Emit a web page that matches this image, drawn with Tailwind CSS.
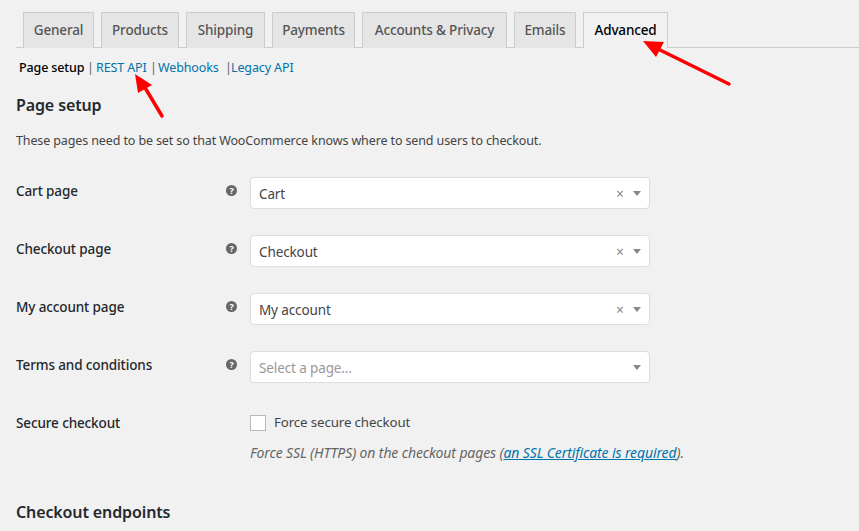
<!DOCTYPE html>
<html lang="en">
<head>
    <meta charset="UTF-8">
    <title>WooCommerce settings</title>
    <script src="https://cdn.jsdelivr.net/npm/@tailwindcss/browser@4"></script>
</head>
<body class="bg-[#f1f1f1] h-[531px] w-[859px] overflow-hidden relative font-['Noto_Sans','Open_Sans',sans-serif] text-[12.5px] tracking-[-0.12px] text-[#444]">
    <!-- Tabs -->
    <div class="ml-4 pt-3 h-[48px] border-b border-[#ccc] flex pl-[7px] gap-[7px] text-[13.5px] tracking-[-0.15px] font-medium text-[#555]">
        <div class="w-[71px] h-[36px] pb-[1px] bg-[#e5e5e5] border border-b-0 border-[#ccc] flex items-center justify-center">General</div>
        <div class="w-[78px] h-[36px] pb-[1px] bg-[#e5e5e5] border border-b-0 border-[#ccc] flex items-center justify-center">Products</div>
        <div class="w-[79px] h-[36px] pb-[1px] bg-[#e5e5e5] border border-b-0 border-[#ccc] flex items-center justify-center">Shipping</div>
        <div class="w-[83px] h-[36px] pb-[1px] bg-[#e5e5e5] border border-b-0 border-[#ccc] flex items-center justify-center">Payments</div>
        <div class="w-[145px] h-[36px] pb-[1px] bg-[#e5e5e5] border border-b-0 border-[#ccc] flex items-center justify-center">Accounts &amp; Privacy</div>
        <div class="w-[62px] h-[36px] pb-[1px] bg-[#e5e5e5] border border-b-0 border-[#ccc] flex items-center justify-center">Emails</div>
        <div class="w-[85px] h-[36px] pb-[1px] bg-[#f1f1f1] border border-b-0 border-[#ccc] flex items-center justify-center text-black z-10">Advanced</div>
    </div>

    <!-- Sub nav -->
    <div class="ml-[19px] mt-[11px] h-[18px] flex items-center text-[#666] leading-[18px] whitespace-nowrap">
        <span class="font-medium text-black w-[68px]">Page setup</span>
        <span class="w-[9px]">|</span>
        <a class="text-[#0073aa] w-[54px]">REST API</a>
        <span class="w-[8px]">|</span>
        <a class="text-[#0073aa] w-[67px]">Webhooks</a>
        <span class="w-[6px]">|</span>
        <a class="text-[#0073aa]">Legacy API</a>
    </div>

    <main class="px-4">
        <h2 class="mt-[17px] text-[16px] leading-[22px] font-semibold text-[#23282d]">Page setup</h2>
        <p class="mt-[16px] leading-[18px] whitespace-nowrap">These pages need to be set so that WooCommerce knows where to send users to checkout.</p>

        <div class="mt-[27px] flex flex-col gap-[26px] text-[13.5px]">
            <div class="flex h-[32px]">
                <label class="w-[210px] pt-[4px] font-medium text-[#23282d]">Cart page</label>
                <div class="w-[24px] pt-[8px]"><svg class="w-[11px] h-[11px]" viewBox="0 0 11 11"><circle cx="5.5" cy="5.5" r="5.5" fill="#666"/><text x="5.5" y="9" text-anchor="middle" font-size="9" font-weight="700" fill="#fff">?</text></svg></div>
                <div class="w-[400px] h-[32px] pt-[2px] bg-white border border-[#ddd] rounded-[4px] flex items-center pl-2 text-[#444] relative">
                    Cart
                    <span class="absolute right-[25px] top-[7px] text-[14px] leading-[18px] text-[#888]">×</span>
                    <span class="absolute right-[8px] top-[13px] border-x-[4.5px] border-x-transparent border-t-[5px] border-t-[#888]"></span>
                </div>
            </div>
            <div class="flex h-[32px]">
                <label class="w-[210px] pt-[4px] font-medium text-[#23282d]">Checkout page</label>
                <div class="w-[24px] pt-[8px]"><svg class="w-[11px] h-[11px]" viewBox="0 0 11 11"><circle cx="5.5" cy="5.5" r="5.5" fill="#666"/><text x="5.5" y="9" text-anchor="middle" font-size="9" font-weight="700" fill="#fff">?</text></svg></div>
                <div class="w-[400px] h-[32px] pt-[2px] bg-white border border-[#ddd] rounded-[4px] flex items-center pl-2 text-[#444] relative">
                    Checkout
                    <span class="absolute right-[25px] top-[7px] text-[14px] leading-[18px] text-[#888]">×</span>
                    <span class="absolute right-[8px] top-[13px] border-x-[4.5px] border-x-transparent border-t-[5px] border-t-[#888]"></span>
                </div>
            </div>
            <div class="flex h-[32px]">
                <label class="w-[210px] pt-[4px] font-medium text-[#23282d]">My account page</label>
                <div class="w-[24px] pt-[8px]"><svg class="w-[11px] h-[11px]" viewBox="0 0 11 11"><circle cx="5.5" cy="5.5" r="5.5" fill="#666"/><text x="5.5" y="9" text-anchor="middle" font-size="9" font-weight="700" fill="#fff">?</text></svg></div>
                <div class="w-[400px] h-[32px] pt-[2px] bg-white border border-[#ddd] rounded-[4px] flex items-center pl-2 text-[#444] relative">
                    My account
                    <span class="absolute right-[25px] top-[7px] text-[14px] leading-[18px] text-[#888]">×</span>
                    <span class="absolute right-[8px] top-[13px] border-x-[4.5px] border-x-transparent border-t-[5px] border-t-[#888]"></span>
                </div>
            </div>
            <div class="flex h-[32px]">
                <label class="w-[210px] pt-[4px] font-medium text-[#23282d]">Terms and conditions</label>
                <div class="w-[24px] pt-[8px]"><svg class="w-[11px] h-[11px]" viewBox="0 0 11 11"><circle cx="5.5" cy="5.5" r="5.5" fill="#666"/><text x="5.5" y="9" text-anchor="middle" font-size="9" font-weight="700" fill="#fff">?</text></svg></div>
                <div class="w-[400px] h-[32px] pt-[2px] bg-white border border-[#ddd] rounded-[4px] flex items-center pl-2 text-[#999] relative">
                    Select a page...
                    <span class="absolute right-[8px] top-[13px] border-x-[4.5px] border-x-transparent border-t-[5px] border-t-[#888]"></span>
                </div>
            </div>
            <div class="flex mt-[2px]">
                <label class="w-[234px] shrink-0 font-medium text-[#23282d] pt-[2px]">Secure checkout</label>
                <div>
                    <div class="flex items-center h-[24px]">
                        <span class="w-[16px] h-[16px] bg-white border border-[#b4b9be]"></span>
                        <span class="ml-2 text-[13.3px]">Force secure checkout</span>
                    </div>
                    <p class="mt-[9px] italic text-[14px] text-[#666] leading-[18px] whitespace-nowrap">Force SSL (HTTPS) on the checkout pages (<a class="text-[#0073aa] underline">an SSL Certificate is required</a>).</p>
                </div>
            </div>
        </div>

        <h2 class="mt-[39px] text-[16px] leading-[22px] font-semibold text-[#23282d]">Checkout endpoints</h2>
    </main>

    <!-- Annotation arrows -->
    <svg class="absolute left-0 top-0 z-20 pointer-events-none" width="859" height="531" viewBox="0 0 859 531">
        <line x1="729" y1="84" x2="656" y2="48" stroke="#f00" stroke-width="3.5" stroke-linecap="round"/>
        <polygon points="643,41 664,42 656,57" fill="#f00"/>
        <line x1="162" y1="116" x2="144" y2="86" stroke="#f00" stroke-width="3.5" stroke-linecap="round"/>
        <polygon points="135,74 152,85 138,93" fill="#f00"/>
    </svg>
</body>
</html>
